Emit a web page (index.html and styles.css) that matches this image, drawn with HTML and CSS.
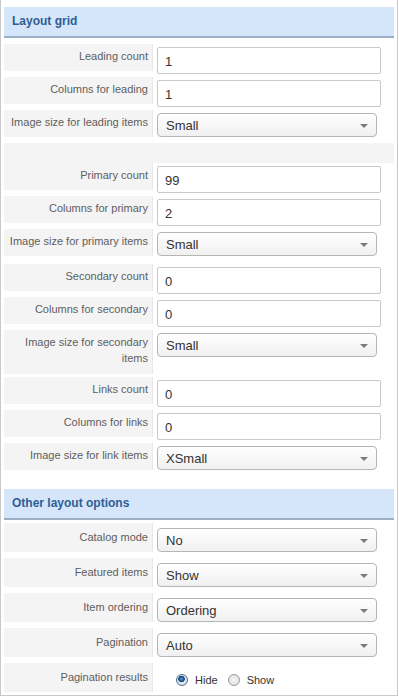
FILE: index.html
```html
<!DOCTYPE html>
<html>
<head>
<meta charset="utf-8">
<link rel="stylesheet" href="styles.css">
</head>
<body>
<div class="panel">
  <h3 class="sec-head">Layout grid</h3>
  <div class="rows">
    <div class="row"><div class="key">Leading count</div><div class="val"><input class="txt" type="text" value="1"></div></div>
    <div class="row"><div class="key">Columns for leading</div><div class="val"><input class="txt" type="text" value="1"></div></div>
    <div class="row"><div class="key">Image size for leading items</div><div class="val"><span class="sel"><select><option>Small</option></select></span></div></div>
    <div class="spacer"></div>
    <div class="row"><div class="key">Primary count</div><div class="val"><input class="txt" type="text" value="99"></div></div>
    <div class="row"><div class="key">Columns for primary</div><div class="val"><input class="txt" type="text" value="2"></div></div>
    <div class="row"><div class="key">Image size for primary items</div><div class="val"><span class="sel"><select><option>Small</option></select></span></div></div>
    <div class="row row-gap"><div class="key">Secondary count</div><div class="val"><input class="txt" type="text" value="0"></div></div>
    <div class="row"><div class="key">Columns for secondary</div><div class="val"><input class="txt" type="text" value="0"></div></div>
    <div class="row"><div class="key key-wrap">Image size for secondary items</div><div class="val"><span class="sel"><select><option>Small</option></select></span></div></div>
    <div class="row"><div class="key">Links count</div><div class="val"><input class="txt" type="text" value="0"></div></div>
    <div class="row"><div class="key">Columns for links</div><div class="val"><input class="txt" type="text" value="0"></div></div>
    <div class="row"><div class="key">Image size for link items</div><div class="val"><span class="sel"><select><option>XSmall</option></select></span></div></div>
  </div>
  <h3 class="sec-head sec-two">Other layout options</h3>
  <div class="rows rows-two">
    <div class="row"><div class="key">Catalog mode</div><div class="val"><span class="sel"><select><option>No</option></select></span></div></div>
    <div class="row"><div class="key">Featured items</div><div class="val"><span class="sel"><select><option>Show</option></select></span></div></div>
    <div class="row"><div class="key">Item ordering</div><div class="val"><span class="sel"><select><option>Ordering</option></select></span></div></div>
    <div class="row"><div class="key">Pagination</div><div class="val"><span class="sel"><select><option>Auto</option></select></span></div></div>
    <div class="row"><div class="key">Pagination results</div><div class="val radios">
      <label class="rad"><input type="radio" name="pr" checked><span>Hide</span></label>
      <label class="rad"><input type="radio" name="pr"><span>Show</span></label>
    </div></div>
  </div>
</div>
</body>
</html>
```
FILE: styles.css
```css
html, body {
  margin: 0;
  padding: 0;
  background: #fff;
}
body {
  font-family: "Liberation Sans", Arial, sans-serif;
  font-size: 11px;
  color: #666;
}
.panel {
  width: 390px;
  border: 1px solid #c9c9c9;
  border-top: none;
  padding: 7px 3px 3px 3px;
}
.sec-head {
  margin: 0;
  height: 29px;
  line-height: 29px;
  padding: 0 0 0 8px;
  background: #d5e6fa;
  border-bottom: 2px solid #9bb0c7;
  color: #2f5e93;
  font-size: 12px;
  font-weight: bold;
}
.sec-two {
  margin-top: 16px;
}
.rows {
  padding-top: 6px;
  display: flex;
  flex-direction: column;
  gap: 3px;
}
.rows-two {
  padding-top: 3px;
  gap: 6px;
}
.row {
  display: flex;
  align-items: flex-start;
}
.row-gap {
  margin-top: 2px;
}
.key {
  box-sizing: border-box;
  width: 149px;
  min-height: 27px;
  padding: 4px 4px 6px 4px;
  text-align: right;
  line-height: 16px;
  background: #f4f4f4;
  border-right: 1px solid #e8e8e8;
  color: #5e5e5e;
}
.key-wrap {
  padding-bottom: 8px;
}
.rows-two .key {
  min-height: 29px;
  padding-top: 6px;
}
.val {
  display: flex;
  align-items: flex-start;
  padding: 3px 0 0 4px;
  min-height: 27px;
}
.rows-two .val {
  padding-top: 5px;
  min-height: 24px;
}
.txt {
  box-sizing: border-box;
  width: 224px;
  height: 27px;
  margin: 0;
  padding: 2px 7px 0 7px;
  border: 1px solid #c8c8c8;
  border-radius: 2px;
  font-family: "Liberation Sans", Arial, sans-serif;
  font-size: 13px;
  color: #333;
  background: #fff;
  outline: none;
}
.sel {
  position: relative;
  display: block;
  height: 24px;
}
.sel select {
  display: block;
  box-sizing: border-box;
  width: 220px;
  height: 24px;
  margin: 0;
  padding: 1px 7px 0 8px;
  border: 1px solid #b5b5b5;
  border-radius: 4px;
  background: linear-gradient(#ffffff, #f0f0f0);
  -webkit-appearance: none;
  appearance: none;
  font-family: "Liberation Sans", Arial, sans-serif;
  font-size: 13px;
  color: #333;
  outline: none;
}
.sel::after {
  content: "";
  position: absolute;
  right: 9px;
  top: 11px;
  border-left: 4px solid transparent;
  border-right: 4px solid transparent;
  border-top: 4px solid #7a7a7a;
  pointer-events: none;
}
.spacer {
  height: 20px;
  background: #f4f4f4;
  margin: 0 0 -3px 0;
}
.radios {
  align-items: center;
  padding: 8px 0 0 23px;
  gap: 10px;
}
.rad {
  display: flex;
  align-items: center;
  gap: 7px;
  color: #333;
  font-size: 11px;
}
.rad input {
  -webkit-appearance: none;
  appearance: none;
  margin: 0;
  width: 12px;
  height: 12px;
  border-radius: 50%;
  border: 1px solid #9a9a9a;
  background: radial-gradient(circle at 50% 50%, #f6f6f6 0, #dcdcdc 100%);
  box-sizing: border-box;
}
.rad input:checked {
  border-color: #4d6c8a;
  background: radial-gradient(circle at 45% 40%, #5ea0d8 0, #174b80 2.5px, #174b80 3px, #e8eef4 3.6px, #c6d4e2 100%);
}
```
